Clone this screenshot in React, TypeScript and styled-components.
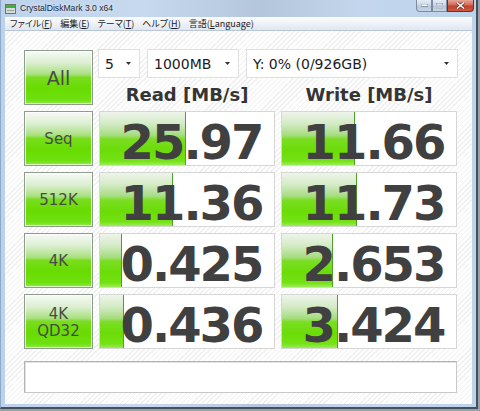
import { Fragment } from 'react';
import styled, { createGlobalStyle } from 'styled-components';

const GlobalStyle = createGlobalStyle`
  html, body {
    margin: 0;
    padding: 0;
  }
  body {
    width: 480px;
    height: 411px;
    overflow: hidden;
    background: #97a1ab;
    font-family: 'DejaVu Sans', sans-serif;
  }
`;

const Frame = styled.div`
  width: 478px;
  height: 409px;
  box-sizing: border-box;
  display: flex;
  flex-direction: column;
  padding: 0 4px 3px 4px;
  border-left: 1px solid #8fa9c8;
  border-right: 2px solid #465059;
  border-bottom: 2px solid #465059;
  background: linear-gradient(to right, #bcd2ec 0%, #c7d9ee 30%, #b3c6dc 55%, #c3d6ec 75%, #bdd3ec 100%);
`;

const TitleBar = styled.div`
  height: 17px;
  display: flex;
  align-items: flex-start;
`;

const AppIcon = styled.svg`
  margin: 4px 4px 0 0;
  flex: none;
`;

const TitleText = styled.span`
  margin-top: 3px;
  font-family: 'Liberation Sans', Arial, sans-serif;
  font-size: 8.6px;
  color: #1e2a38;
  text-shadow: 0 0 4px rgba(255, 255, 255, 0.9);
`;

const Controls = styled.div`
  margin-left: auto;
  margin-right: -2px;
  display: flex;
  height: 12px;
`;

const CtlButton = styled.div<{ $w: number; $close?: boolean }>`
  width: ${p => p.$w}px;
  height: 12px;
  box-sizing: border-box;
  display: flex;
  align-items: center;
  justify-content: center;
  border: 1px solid ${p => (p.$close ? '#7a2a20' : '#7d8b9c')};
  border-top: none;
  background: ${p =>
    p.$close
      ? 'linear-gradient(to bottom, #e6a597 0%, #d26a58 45%, #c2402c 55%, #cd5a3e 100%)'
      : 'linear-gradient(to bottom, #e4ecf5 0%, #cbd8e8 45%, #b6c7dc 55%, #c7d6e8 100%)'};
  &:first-child {
    border-bottom-left-radius: 4px;
  }
  &:last-child {
    border-bottom-right-radius: 4px;
  }
`;

const MenuBar = styled.div`
  height: 14px;
  box-sizing: border-box;
  display: flex;
  align-items: center;
  padding-left: 5px;
  gap: 8px;
  background: linear-gradient(to bottom, #fbfcfe 0%, #eef2f8 50%, #dfe7f2 100%);
  border-bottom: 1px solid #b9c6d6;
`;

const MenuItem = styled.span`
  font-family: 'Noto Sans CJK JP', 'Noto Sans', sans-serif;
  font-feature-settings: 'palt';
  font-size: 9px;
  line-height: 13px;
  color: #1a1a1a;
  u {
    text-decoration: underline;
    text-underline-offset: 1px;
  }
`;

const Client = styled.div`
  flex: 1;
  box-sizing: border-box;
  padding: 18px 0 0 19px;
  background: repeating-linear-gradient(135deg, #ffffff 0px, #ffffff 2.6px, #efefef 2.6px, #efefef 3.6px);
`;

const Board = styled.div`
  display: grid;
  grid-template-columns: 69px 176px 176px;
  column-gap: 6px;
  row-gap: 6px;
`;

const TopArea = styled.div`
  grid-column: 1 / 4;
  display: grid;
  grid-template-columns: 69px 176px 176px;
  grid-template-rows: 29px 27px;
  column-gap: 6px;
`;

const LabelButton = styled.div<{ $big?: boolean }>`
  box-sizing: border-box;
  height: 55px;
  display: flex;
  flex-direction: column;
  align-items: center;
  justify-content: center;
  padding-top: 2px;
  border: 1px solid #8d9c8d;
  box-shadow: inset 0 0 0 1px rgba(255, 255, 255, 0.7);
  background: linear-gradient(
    to bottom,
    #f7faf6 0%,
    #dcefd2 22%,
    #a9e07f 44%,
    #79dd1e 50%,
    #68dc00 70%,
    #6fe010 92%,
    #93ea4c 100%
  );
  font-family: 'Comic Sans MS', 'DejaVu Sans', sans-serif;
  font-size: ${p => (p.$big ? 19 : 15)}px;
  line-height: 17px;
  color: #474b47;
`;

const AllButton = styled(LabelButton)`
  grid-row: 1 / 3;
  margin-top: 1px;
`;

const ComboRow = styled.div`
  grid-column: 2 / 4;
  margin-left: -1px;
  width: 360px;
  display: flex;
  gap: 7px;
`;

const Combo = styled.div<{ $w: number }>`
  width: ${p => p.$w}px;
  flex: none;
  height: 29px;
  box-sizing: border-box;
  display: flex;
  align-items: center;
  justify-content: space-between;
  padding: 0 8px 0 6px;
  background: #ffffff;
  border: 1px solid #e0e0e0;
  font-size: 14px;
  color: #1c1c1c;
`;

const Header = styled.div`
  padding-top: 6px;
  text-align: center;
  font-size: 18px;
  font-weight: bold;
  color: #353535;
`;

const Cell = styled.div`
  position: relative;
  box-sizing: border-box;
  height: 55px;
  background: #ffffff;
  border: 1px solid #d6d6d6;
`;

const Fill = styled.div`
  position: absolute;
  left: 0;
  top: 0;
  bottom: 0;
  border-right: 1px solid #4f9e2e;
  background: linear-gradient(
    to bottom,
    #eef4eb 0%,
    #d4ebc6 22%,
    #a6dc80 44%,
    #7ade22 51%,
    #6bdc08 72%,
    #74e214 92%,
    #9cec58 100%
  );
`;

const Value = styled.div`
  position: relative;
  box-sizing: border-box;
  height: 53px;
  padding: 8px 0 0 9px;
  text-align: center;
  font-size: 48px;
  font-weight: bold;
  letter-spacing: -2px;
  line-height: 45px;
  color: #404040;
`;

const Comment = styled.div`
  grid-column: 1 / 4;
  margin-top: 6px;
  height: 32px;
  box-sizing: border-box;
  background: #ffffff;
  border: 1px solid #b2b2b2;
  border-right-color: #c8c8c8;
  border-bottom-color: #c8c8c8;
  box-shadow: inset 1px 1px 0 #e4e4e4;
`;

const Arrow = () => (
  <svg width="5" height="3" viewBox="0 0 5 3">
    <path d="M0 0h5L2.5 3z" fill="#333" />
  </svg>
);

const rows = [
  { label: ['Seq'], read: '25.97', readW: 85, write: '11.66', writeW: 72 },
  { label: ['512K'], read: '11.36', readW: 72, write: '11.73', writeW: 74 },
  { label: ['4K'], read: '0.425', readW: 21, write: '2.653', writeW: 50 },
  { label: ['4K', 'QD32'], read: '0.436', readW: 23, write: '3.424', writeW: 55 },
];

export default function App() {
  return (
    <>
      <GlobalStyle />
      <Frame>
        <TitleBar>
          <AppIcon width="11" height="10" viewBox="0 0 11 10">
            <rect x="0.5" y="0.5" width="10" height="9" fill="#d8dcd8" stroke="#6c746c" />
            <rect x="1" y="1" width="9" height="3" fill="#3cb43c" />
            <rect x="2" y="6" width="7" height="1" fill="#9aa29a" />
          </AppIcon>
          <TitleText>CrystalDiskMark 3.0 x64</TitleText>
          <Controls>
            <CtlButton $w={16}>
              <svg width="7" height="3" viewBox="0 0 7 3">
                <rect x="0" y="0" width="7" height="2.5" fill="#fff" stroke="#50607a" strokeWidth="0.6" />
              </svg>
            </CtlButton>
            <CtlButton $w={15}>
              <svg width="7" height="6" viewBox="0 0 7 6">
                <rect x="0.5" y="0.5" width="6" height="5" fill="none" stroke="#fff" strokeWidth="1" />
                <rect x="0.2" y="0.2" width="6.6" height="5.6" fill="none" stroke="#50607a" strokeWidth="0.4" />
              </svg>
            </CtlButton>
            <CtlButton $w={27} $close>
              <svg width="9" height="7" viewBox="0 0 9 7">
                <path d="M1 0.5L8 6.5M8 0.5L1 6.5" stroke="#5a1a10" strokeWidth="2.6" />
                <path d="M1 0.5L8 6.5M8 0.5L1 6.5" stroke="#fff" strokeWidth="1.6" />
              </svg>
            </CtlButton>
          </Controls>
        </TitleBar>
        <MenuBar>
          <MenuItem>ファイル(<u>F</u>)</MenuItem>
          <MenuItem>編集(<u>E</u>)</MenuItem>
          <MenuItem>テーマ(<u>T</u>)</MenuItem>
          <MenuItem>ヘルプ(<u>H</u>)</MenuItem>
          <MenuItem>言語(<u>L</u>anguage)</MenuItem>
        </MenuBar>
        <Client>
          <Board>
            <TopArea>
              <AllButton $big>All</AllButton>
              <ComboRow>
                <Combo $w={42}>5<Arrow /></Combo>
                <Combo $w={92}>1000MB<Arrow /></Combo>
                <Combo $w={212}>Y: 0% (0/926GB)<Arrow /></Combo>
              </ComboRow>
              <Header>Read [MB/s]</Header>
              <Header>Write [MB/s]</Header>
            </TopArea>
            {rows.map(r => (
              <Fragment key={r.read}>
                <LabelButton>
                  {r.label.map(t => (
                    <span key={t}>{t}</span>
                  ))}
                </LabelButton>
                <Cell>
                  <Fill style={{ width: r.readW }} />
                  <Value>{r.read}</Value>
                </Cell>
                <Cell>
                  <Fill style={{ width: r.writeW }} />
                  <Value>{r.write}</Value>
                </Cell>
              </Fragment>
            ))}
            <Comment />
          </Board>
        </Client>
      </Frame>
    </>
  );
}
